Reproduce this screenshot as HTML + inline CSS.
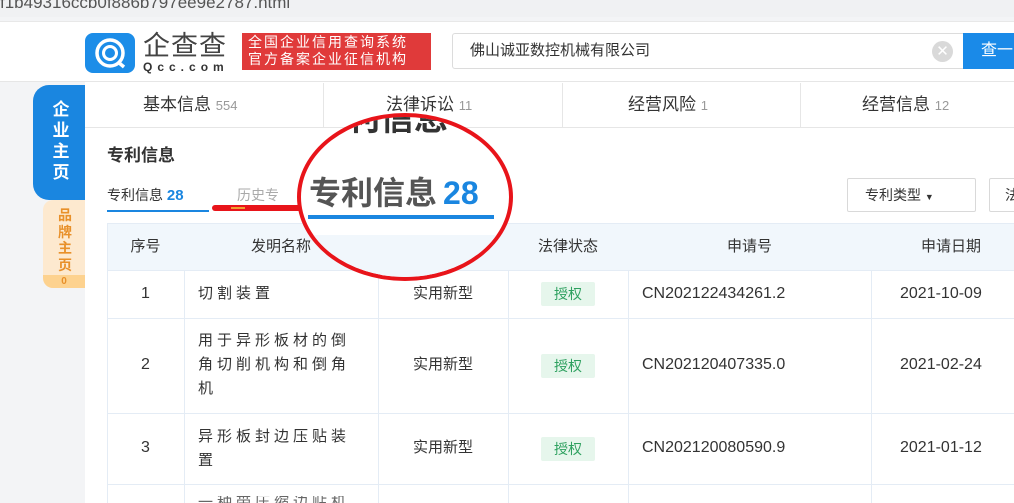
<!DOCTYPE html>
<html><head><meta charset="utf-8"><style>
*{margin:0;padding:0;box-sizing:border-box}
body{width:1014px;height:503px;overflow:hidden;background:#f3f4f6;font-family:"Liberation Sans","Noto Sans CJK SC",sans-serif;position:relative;color:#333}
.a{position:absolute}
.hline{position:absolute;height:1px;background:#e4ecf5}
.vline{position:absolute;width:1px;background:#e4ecf5}
.c{position:absolute;text-align:center;font-size:15px;color:#333;line-height:20px}
.tag{position:absolute;background:#e6f6ec;color:#2fa160;font-size:14px;width:54px;height:24px;line-height:24px;text-align:center;border-radius:2px}
.n{position:absolute;font-size:15px;line-height:24px;width:158px;letter-spacing:4px;color:#333}
</style></head><body>
<div class="a" style="left:0;top:0;width:1014px;height:17px;background:#f0f1f3;font-size:17px;color:#555;line-height:6px;overflow:hidden">f1b49316ccb0f886b797ee9e2787.html</div>
<div class="a" style="left:0;top:21px;width:1014px;height:61px;background:#fff;border-top:1px solid #e8e8e8;border-bottom:1px solid #e6e6e6"></div>
<div class="a" style="left:85px;top:33px;width:50px;height:40px;background:#1c8de8;border-radius:8px"></div>
<svg class="a" style="left:88px;top:34px" width="44" height="38" viewBox="0 0 44 38"><circle cx="22" cy="19" r="13" fill="none" stroke="#fff" stroke-width="3.5"/><circle cx="22" cy="19" r="6.5" fill="none" stroke="#fff" stroke-width="3"/><path d="M30 28 L36 33" stroke="#fff" stroke-width="3.5"/></svg>
<div class="a" style="left:143px;top:33px;font-size:27px;line-height:27px;color:#444;letter-spacing:1px">企查查</div>
<div class="a" style="left:143px;top:61px;font-size:12px;line-height:12px;color:#333;letter-spacing:5px;font-weight:bold">Qcc.com</div>
<div class="a" style="left:242px;top:33px;width:189px;height:37px;background:#e03a3a;color:#fff;font-size:14px;line-height:17px;padding:1px 0 0 6px;letter-spacing:2px;white-space:nowrap;overflow:hidden">全国企业信用查询系统<br>官方备案企业征信机构</div>
<div class="a" style="left:452px;top:33px;width:512px;height:36px;border:1px solid #dcdcdc;border-radius:3px 0 0 3px;background:#fff;font-size:15px;line-height:34px;padding-left:17px;color:#333">佛山诚亚数控机械有限公司</div>
<div class="a" style="left:932px;top:41px;width:21px;height:21px;border-radius:50%;background:#d9d9d9;color:#fff;font-size:15px;line-height:21px;text-align:center">✕</div>
<div class="a" style="left:963px;top:33px;width:60px;height:36px;background:#1a8ae8;color:#fff;font-size:16px;line-height:36px;padding-left:18px">查一</div>
<div class="a" style="left:33px;top:85px;width:52px;height:115px;background:#1a86e0;border-radius:16px 0 0 16px;color:#fff;font-weight:bold;font-size:17px;line-height:21px;text-align:center;padding-top:14px;padding-left:4px">企<br>业<br>主<br>页</div>
<div class="a" style="left:43px;top:200px;width:42px;height:88px;background:#fde9cf;border-radius:10px 0 0 10px;color:#e8902a;font-weight:bold;font-size:14px;line-height:16.5px;text-align:center;padding-top:7px;padding-left:2px;overflow:hidden">品<br>牌<br>主<br>页<div style="position:absolute;left:0;bottom:0;width:42px;height:13px;background:#fdd28f;font-size:10px;line-height:13px">0</div></div>
<div class="a" style="left:85px;top:82px;width:929px;height:421px;background:#fff"></div>
<div class="a" style="left:85px;top:82px;width:929px;height:46px;border-bottom:1px solid #e6e6e6;background:#fff"></div>
<div class="vline" style="left:323px;top:83px;height:45px;background:#e6e6e6"></div>
<div class="vline" style="left:562px;top:83px;height:45px;background:#e6e6e6"></div>
<div class="vline" style="left:800px;top:83px;height:45px;background:#e6e6e6"></div>
<div class="a" style="left:143px;top:94px;font-size:17px;line-height:22px;color:#333">基本信息 <span style="font-size:13px;color:#999">554</span></div>
<div class="a" style="left:386px;top:94px;font-size:17px;line-height:22px;color:#333">法律诉讼 <span style="font-size:13px;color:#999">11</span></div>
<div class="a" style="left:628px;top:94px;font-size:17px;line-height:22px;color:#333">经营风险 <span style="font-size:13px;color:#999">1</span></div>
<div class="a" style="left:862px;top:94px;font-size:17px;line-height:22px;color:#333">经营信息 <span style="font-size:13px;color:#999">12</span></div>
<div class="a" style="left:107px;top:145px;font-size:17px;line-height:22px;font-weight:bold;color:#333">专利信息</div>
<div class="a" style="left:107px;top:185px;font-size:14px;line-height:20px;color:#333">专利信息 <b style="color:#1a86e0;font-size:15px">28</b></div>
<div class="a" style="left:107px;top:210px;width:102px;height:2px;background:#1a86e0"></div>
<div class="a" style="left:237px;top:185px;font-size:14px;line-height:20px;color:#aaa">历史专</div>
<div class="a" style="left:212px;top:205px;width:90px;height:6px;background:#e8141a;border-radius:3px"></div>
<div class="a" style="left:231px;top:207px;width:14px;height:2px;background:#f0a030"></div>
<div class="a" style="left:847px;top:178px;width:129px;height:34px;border:1px solid #d9d9d9;border-radius:2px;font-size:14px;line-height:32px;padding-left:17px">专利类型 <span style="font-size:9px">▼</span></div>
<div class="a" style="left:989px;top:178px;width:40px;height:34px;border:1px solid #d9d9d9;border-radius:2px;font-size:14px;line-height:32px;padding-left:15px">法</div>
<div class="a" style="left:107px;top:223px;width:907px;height:48px;background:#f1f7fc"></div>
<div class="hline" style="left:107px;top:223px;width:907px"></div>
<div class="hline" style="left:107px;top:270px;width:907px"></div>
<div class="hline" style="left:107px;top:318px;width:907px"></div>
<div class="hline" style="left:107px;top:413px;width:907px"></div>
<div class="hline" style="left:107px;top:484px;width:907px"></div>
<div class="vline" style="left:107px;top:223px;height:280px"></div>
<div class="vline" style="left:184px;top:270px;height:233px"></div>
<div class="vline" style="left:378px;top:270px;height:233px"></div>
<div class="vline" style="left:508px;top:270px;height:233px"></div>
<div class="vline" style="left:628px;top:270px;height:233px"></div>
<div class="vline" style="left:871px;top:270px;height:233px"></div>
<div class="c" style="left:107px;top:237px;width:77px">序号</div>
<div class="c" style="left:184px;top:237px;width:194px">发明名称</div>
<div class="c" style="left:508px;top:237px;width:120px">法律状态</div>
<div class="c" style="left:628px;top:237px;width:243px">申请号</div>
<div class="c" style="left:871px;top:237px;width:160px">申请日期</div>
<div class="c" style="left:107px;top:284px;width:77px;font-size:16px">1</div>
<div class="n" style="left:198px;top:282px">切割装置</div>
<div class="c" style="left:378px;top:284px;width:130px">实用新型</div>
<div class="tag" style="left:541px;top:282px">授权</div>
<div class="a" style="left:642px;top:284px;font-size:16px;line-height:20px">CN202122434261.2</div>
<div class="a" style="left:900px;top:284px;font-size:16px;line-height:20px">2021-10-09</div>
<div class="c" style="left:107px;top:355px;width:77px;font-size:16px">2</div>
<div class="n" style="left:198px;top:329px">用于异形板材的倒角切削机构和倒角机</div>
<div class="c" style="left:378px;top:355px;width:130px">实用新型</div>
<div class="tag" style="left:541px;top:354px">授权</div>
<div class="a" style="left:642px;top:355px;font-size:16px;line-height:20px">CN202120407335.0</div>
<div class="a" style="left:900px;top:355px;font-size:16px;line-height:20px">2021-02-24</div>
<div class="c" style="left:107px;top:438px;width:77px;font-size:16px">3</div>
<div class="n" style="left:198px;top:425px">异形板封边压贴装置</div>
<div class="c" style="left:378px;top:438px;width:130px">实用新型</div>
<div class="tag" style="left:541px;top:437px">授权</div>
<div class="a" style="left:642px;top:438px;font-size:16px;line-height:20px">CN202120080590.9</div>
<div class="a" style="left:900px;top:438px;font-size:16px;line-height:20px">2021-01-12</div>
<div class="a" style="left:198px;top:496px;font-size:15px;color:#666;height:7px;overflow:hidden;line-height:14px;letter-spacing:4px">一种带压缩边贴机</div>
<div class="a" style="left:297px;top:113px;width:216px;height:168px;border-radius:50%;border:4px solid #e8141a;background:#fff;overflow:hidden">
  <div class="a" style="left:45px;top:-18px;font-size:34px;line-height:40px;font-weight:bold;color:#333">利信息</div>
  <div class="a" style="left:8px;top:56px;font-size:32px;line-height:40px;font-weight:bold;color:#555;white-space:nowrap">专利信息<span style="color:#1a86e0;margin-left:6px">28</span></div>
  <div class="a" style="left:7px;top:98px;width:186px;height:4px;background:#1a86e0"></div>
  <div class="a" style="left:0;top:118px;width:216px;height:60px;background:#f1f7fc"></div>
</div>
</body></html>
